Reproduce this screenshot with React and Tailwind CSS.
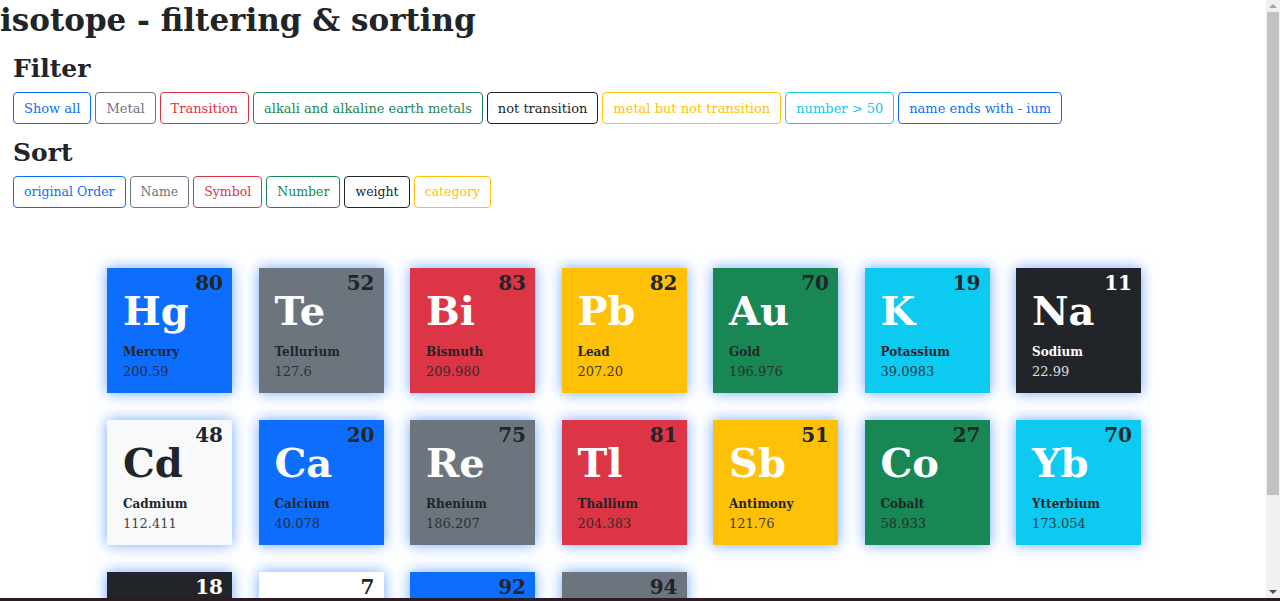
import React from "react";

const filters = [
  { label: "Show all", c: "border-[#0d6efd] text-[#0d6efd]" },
  { label: "Metal", c: "border-[#6c757d] text-[#6c757d]" },
  { label: "Transition", c: "border-[#dc3545] text-[#dc3545]" },
  { label: "alkali and alkaline earth metals", c: "border-[#198754] text-[#198754]" },
  { label: "not transition", c: "border-[#212529] text-[#212529]" },
  { label: "metal but not transition", c: "border-[#ffc107] text-[#ffc107]" },
  { label: "number > 50", c: "border-[#0dcaf0] text-[#0dcaf0]" },
  { label: "name ends with - ium", c: "border-[#0d6efd] text-[#0d6efd]" },
];

const sorts = [
  { label: "original Order", c: "border-[#0d6efd] text-[#0d6efd]" },
  { label: "Name", c: "border-[#6c757d] text-[#6c757d]" },
  { label: "Symbol", c: "border-[#dc3545] text-[#dc3545]" },
  { label: "Number", c: "border-[#198754] text-[#198754]" },
  { label: "weight", c: "border-[#212529] text-[#212529]" },
  { label: "category", c: "border-[#ffc107] text-[#ffc107]" },
];

// bg, symbol colour, other text colour
const tones = {
  primary: ["bg-[#0d6efd]", "text-white", "text-[#212529]"],
  secondary: ["bg-[#6c757d]", "text-white", "text-[#212529]"],
  danger: ["bg-[#dc3545]", "text-white", "text-[#212529]"],
  warning: ["bg-[#ffc107]", "text-white", "text-[#212529]"],
  success: ["bg-[#198754]", "text-white", "text-[#212529]"],
  info: ["bg-[#0dcaf0]", "text-white", "text-[#212529]"],
  dark: ["bg-[#212529]", "text-white", "text-white"],
  light: ["bg-[#f8f9fa]", "text-[#212529]", "text-[#212529]"],
  white: ["bg-white", "text-[#212529]", "text-[#212529]"],
};

const elements = [
  { s: "Hg", n: 80, name: "Mercury", w: "200.59", t: "primary" },
  { s: "Te", n: 52, name: "Tellurium", w: "127.6", t: "secondary" },
  { s: "Bi", n: 83, name: "Bismuth", w: "209.980", t: "danger" },
  { s: "Pb", n: 82, name: "Lead", w: "207.20", t: "warning" },
  { s: "Au", n: 70, name: "Gold", w: "196.976", t: "success" },
  { s: "K", n: 19, name: "Potassium", w: "39.0983", t: "info" },
  { s: "Na", n: 11, name: "Sodium", w: "22.99", t: "dark" },
  { s: "Cd", n: 48, name: "Cadmium", w: "112.411", t: "light" },
  { s: "Ca", n: 20, name: "Calcium", w: "40.078", t: "primary" },
  { s: "Re", n: 75, name: "Rhenium", w: "186.207", t: "secondary" },
  { s: "Tl", n: 81, name: "Thallium", w: "204.383", t: "danger" },
  { s: "Sb", n: 51, name: "Antimony", w: "121.76", t: "warning" },
  { s: "Co", n: 27, name: "Cobalt", w: "58.933", t: "success" },
  { s: "Yb", n: 70, name: "Ytterbium", w: "173.054", t: "info" },
  { s: "Ar", n: 18, name: "Argon", w: "39.948", t: "dark" },
  { s: "N", n: 7, name: "Nitrogen", w: "14.007", t: "white" },
  { s: "U", n: 92, name: "Uranium", w: "238.029", t: "primary" },
  { s: "Pu", n: 94, name: "Plutonium", w: "(244)", t: "secondary" },
];

const Btn = ({ label, c, size }) => (
  <button
    className={`h-[32px] px-[10px] border rounded-[4px] leading-none bg-white ${size} ${c}`}
  >
    {label}
  </button>
);

const Tile = ({ e }) => {
  const [bg, sym, txt] = tones[e.t];
  return (
    <div
      className={`w-[125px] h-[125px] flex flex-col px-[16px] pt-[4px] shadow-[0_0_13px_rgba(13,110,253,0.6)] ${bg}`}
    >
      <div className={`self-end -mr-[7px] text-[20px] font-bold leading-[22px] ${txt}`}>
        {e.n}
      </div>
      <div className={`text-[40px] font-bold leading-[36px] -mt-[1px] ${sym}`}>{e.s}</div>
      <div className={`text-[12px] font-bold mt-[15px] leading-[16px] ${txt}`}>{e.name}</div>
      <div className={`text-[13px] leading-[20px] mt-[2px] opacity-85 ${txt}`}>{e.w}</div>
    </div>
  );
};

const App = () => {
  return (
    <div className="h-[601px] flex flex-col overflow-hidden bg-white text-[#212529] font-['DejaVu_Serif',serif]">
      <div className="flex flex-1 min-h-0">
        <div className="flex-1 min-w-0 overflow-hidden">
          <h1 className="text-[31px] font-bold leading-[40px]">isotope - filtering &amp; sorting</h1>
          <div className="px-[13px]">
            <h2 className="text-[25px] font-bold leading-[32px] mt-[13px]">Filter</h2>
            <div className="flex gap-[4px] mt-[7px]">
              {filters.map((f, i) => (
                <Btn key={i} size="text-[13px]" {...f} />
              ))}
            </div>
            <h2 className="text-[25px] font-bold leading-[32px] mt-[13px]">Sort</h2>
            <div className="flex gap-[4px] mt-[7px]">
              {sorts.map((f, i) => (
                <Btn key={i} size="text-[12.5px]" {...f} />
              ))}
            </div>
          </div>
          <div className="grid grid-cols-[repeat(7,125px)] gap-x-[26.5px] gap-y-[27px] pl-[107px] mt-[60px]">
            {elements.map((e, i) => (
              <Tile key={i} e={e} />
            ))}
          </div>
        </div>
        <div className="w-[14px] bg-[#f1f1f1] flex flex-col items-center">
          <div className="h-[12px] flex items-center justify-center">
            <div className="w-0 h-0 border-l-[4px] border-r-[4px] border-b-[4px] border-l-transparent border-r-transparent border-b-[#a3a3a3]" />
          </div>
          <div className="w-[12px] h-[483px] bg-[#c1c1c1]" />
          <div className="flex-1" />
          <div className="h-[12px] flex items-center justify-center">
            <div className="w-0 h-0 border-l-[4px] border-r-[4px] border-t-[4px] border-l-transparent border-r-transparent border-t-[#505050]" />
          </div>
        </div>
      </div>
      <div className="h-[3px] bg-[#2a1c20]" />
    </div>
  );
};

export default App;
